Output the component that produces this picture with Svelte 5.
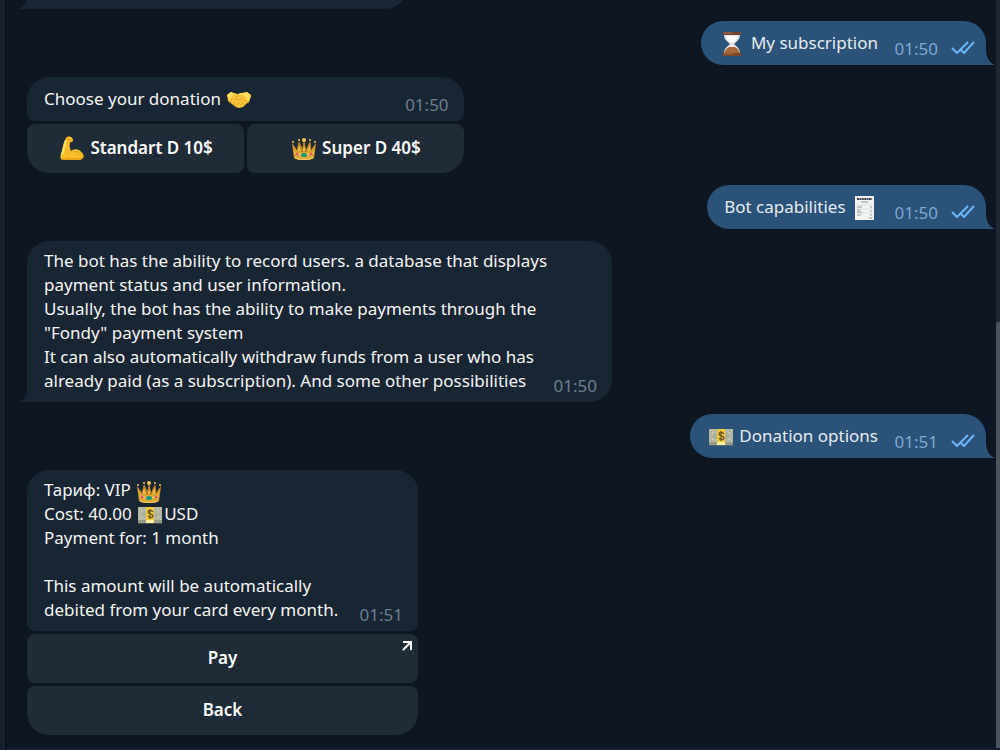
<script lang="ts">
  type Emoji = "hourglass" | "handshake" | "muscle" | "crown" | "receipt" | "money";
  type Part = string | { emoji: Emoji };
  type Action = { label: string; icon?: Emoji; href?: string };
  type Message = {
    id: number;
    out?: boolean;
    time: string;
    parts: Part[];
    width?: number;
    actions?: Action[];
    columns?: number;
  };

  const messages: Message[] = [
    { id: 1, time: "01:50", parts: [], width: 380 },
    { id: 2, out: true, time: "01:50", parts: [{ emoji: "hourglass" }, " My subscription"] },
    {
      id: 3,
      time: "01:50",
      parts: ["Choose your donation ", { emoji: "handshake" }],
      columns: 2,
      actions: [
        { label: "Standart D 10$", icon: "muscle" },
        { label: "Super D 40$", icon: "crown" },
      ],
    },
    { id: 4, out: true, time: "01:50", parts: ["Bot capabilities ", { emoji: "receipt" }] },
    {
      id: 5,
      time: "01:50",
      width: 585,
      parts: [
        "The bot has the ability to record users. a database that displays payment status and user information.\n" +
          'Usually, the bot has the ability to make payments through the "Fondy" payment system\n' +
          "It can also automatically withdraw funds from a user who has\nalready paid (as a subscription). And some other possibilities",
      ],
    },
    { id: 6, out: true, time: "01:51", parts: [{ emoji: "money" }, " Donation options"] },
    {
      id: 7,
      time: "01:51",
      width: 391,
      parts: [
        "Тариф: VIP ",
        { emoji: "crown" },
        "\nCost: 40.00 ",
        { emoji: "money" },
        "USD\nPayment for: 1 month\n\nThis amount will be automatically\ndebited from your card every month.",
      ],
      columns: 1,
      actions: [{ label: "Pay", href: "#pay" }, { label: "Back" }],
    },
  ];
</script>

{#snippet emoji(name: Emoji)}
  <svg class="emoji" viewBox="0 0 28 24" aria-hidden="true">
    {#if name === "hourglass"}
      <path d="M6 2h16c0 6-3 7-6 10 3 3 6 4 6 10H6c0-6 3-7 6-10C9 9 6 8 6 2z" fill="#dfe3e6" />
      <path d="M8 4h12c-1 4-3 5-6 7-3-2-5-3-6-7z" fill="#fbfbfa" />
      <path d="M14 14c4 1 7 3 8 8H6c1-5 4-7 8-8z" fill="#a8683c" />
      <path d="M13 12h2l2 3h-6z" fill="#efe7df" />
      <path d="M5 0h18v3H5z" fill="#70432b" />
      <path d="M5 21h18v3H5z" fill="#7b4527" />
      <path d="M6 1h8M6 22h9" stroke="#a87350" />
    {:else if name === "handshake"}
      <path d="M2 7l4-3 7 2 3-1 6-1 4 4-2 6-3 2-3 3-4 1-3-1-4-3-4-3z" fill="#f8c53b" />
      <path d="M2 7l4-3 3 2-4 6-1-1zM26 7l-4-3-3 1 5 8z" fill="#ffdc5c" />
      <path
        d="M13 7l-3 4 3 1 4-2 6 5M15 12l5 5M13 14l4 4M7 12l-2 3M10 14l-2 3M12 16l-2 3"
        fill="none"
        stroke="#dd9d25"
        stroke-width=".8"
        stroke-linecap="round"
      />
      <path d="M14 6l5 0 4 6" fill="none" stroke="#ffe477" />
    {:else if name === "muscle"}
      <path
        d="M8 2c1-2 5-2 6 0 2 2 1 4-1 4l-1 1c-1 3 0 5 1 8 4-3 9-2 12 3 2 4-1 6-5 6H6c-4 0-4-3-3-6C5 12 5 7 8 2z"
        fill="#f9bd29"
      />
      <path d="M8 4c-2 5-2 9-4 15" fill="none" stroke="#ffe169" stroke-width="2" />
      <path d="M8 3l5 1-2 3M13 15l-3 3M15 16c3-1 6 0 8 3" fill="none" stroke="#e39d1a" />
      <path d="M4 23h15c4 0 6-1 6-3" fill="none" stroke="#d9860c" />
    {:else if name === "crown"}
      <path d="M2 7l5 7 2-9 4 9 1-9 2 9 4-9 1 9 5-7-2 15c-5 3-15 3-20 0z" fill="#d49b28" />
      <path d="M4 14c5 3 15 3 20 0l-1 8c-5 3-13 3-18 0z" fill="#dcaa36" />
      <path d="M7 15l2-8 3 9 2-10 2 10 4-9 1 8" fill="#e8bf4c" stroke="#b9781c" />
      <path d="M4 17c5 2 15 2 20 0M5 22c5 2 13 2 18 0" fill="none" stroke="#f3cd62" />
      <g fill="#f3ca4b">
        <circle cx="3" cy="6" r="1" />
        <circle cx="9" cy="4" r="1" />
        <circle cx="14" cy="4" r="2" />
        <circle cx="20" cy="4" r="1" />
        <circle cx="25" cy="6" r="1" />
      </g>
      <ellipse cx="14" cy="19" rx="3" ry="2" fill="#18977a" />
      <circle cx="7" cy="18" r="1.5" fill="#e25a67" />
      <circle cx="21" cy="18" r="1.5" fill="#e25a67" />
    {:else if name === "receipt"}
      <path d="M5 0h19v24H5z" fill="#f2f3f3" />
      <path d="M7 3h15" stroke="#444b52" stroke-width="2" stroke-dasharray="2 .4" />
      <path d="M11 6h7" stroke="#92979c" />
      <path d="M6 9h17M6 13h17M6 17h17" stroke="#dfe2e4" />
      <path
        d="M7 11h5M20 11h2M7 14h3M7 16h5M20 15h2M7 19h4M20 19h2M19 22h3"
        stroke="#80868c"
        stroke-width=".8"
      />
    {:else}
      <path d="M2 4h24v16H2z" fill="#b4b6a0" />
      <path d="M3 5h22v12H3z" fill="#d9dac9" />
      <path d="M4 6h20v10H4z" fill="none" stroke="#92967f" />
      <ellipse cx="8" cy="11" rx="3" ry="4" fill="#aeb29f" />
      <ellipse cx="20" cy="11" rx="3" ry="4" fill="#aeb29f" />
      <path d="M2 18h24M2 20h24" stroke="#7c806e" />
      <path d="M10 4h8v16h-8z" fill="#f1ca3c" />
      <path d="M10 17h8v3h-8z" fill="#fff1a1" />
      <path
        d="M17 9c-1-2-5-2-5 0 0 3 5 1 5 4 0 2-4 2-5 0M14 6v10"
        fill="none"
        stroke="#6d5926"
        stroke-width="1.3"
      />
    {/if}
  </svg>
{/snippet}

<div class="window">
  <div class="side-edge"></div>
  <div class="pane">
    <main class="history">
      {#each messages as message (message.id)}
        <article
          class="message"
          class:out={message.out}
          style:width={message.width ? `${message.width}px` : undefined}
        >
          <div class="bubble" class:with-actions={message.actions}>
            <p class="text">{#each message.parts as part}{#if typeof part === "string"}{part}{:else}{@render emoji(part.emoji)}{/if}{/each}<span class="meta-space"></span></p>
            <div class="meta">
              <time>{message.time}</time>
              {#if message.out}
                <svg class="checks" viewBox="0 0 24 13" role="img" aria-label="Read">
                  <path d="M1 7l5 5L17 1M10 9l3 3L23 1" />
                </svg>
              {/if}
            </div>
            {#if message.out}
              <svg class="tail" viewBox="0 0 9 16" aria-hidden="true">
                <path d="M0 0C0 8 3 14 9 16H0z" />
              </svg>
            {:else if !message.actions}
              <svg class="tail" viewBox="0 0 9 16" aria-hidden="true">
                <path d="M9 3C9 10 6 14 0 16H9z" />
              </svg>
            {/if}
          </div>
          {#if message.actions}
            <div class="actions" class:two={message.columns === 2}>
              {#each message.actions as action (action.label)}
                {#if action.href}
                  <a class="action" href={action.href}>
                    {action.label}
                    <svg class="external" viewBox="0 0 10 10" aria-hidden="true">
                      <path d="M1 1h8v8M9 1L1 9" />
                    </svg>
                  </a>
                {:else}
                  <button type="button" class="action">
                    {#if action.icon}{@render emoji(action.icon)}&nbsp;{/if}{action.label}
                  </button>
                {/if}
              {/each}
            </div>
          {/if}
        </article>
      {/each}
    </main>
    <div class="scrollbar"><div class="thumb"></div></div>
  </div>
</div>

<style>
  :global(body) {
    margin: 0;
    background: #0e1621;
  }

  .window {
    display: flex;
    height: 100vh;
    overflow: hidden;
    box-sizing: border-box;
    background: #0e1621;
    color: #f5f5f5;
    font: 17px/24px "Noto Sans", "Open Sans", sans-serif;
  }

  .side-edge {
    width: 5px;
    flex-shrink: 0;
    background: #17212b;
    border-right: 1px solid #080e16;
  }

  .pane {
    display: flex;
    flex: 1;
    min-width: 0;
    box-sizing: border-box;
    border-bottom: 2px solid #17212b;
  }

  .history {
    flex: 1;
    min-width: 0;
    display: flex;
    flex-direction: column;
    justify-content: flex-end;
    gap: 12px;
    padding: 0 10px 13px 21px;
  }

  .message {
    align-self: flex-start;
    flex-shrink: 0;
    max-width: 585px;
  }

  .message.out {
    align-self: flex-end;
  }

  .bubble {
    position: relative;
    display: flex;
    align-items: center;
    box-sizing: border-box;
    min-height: 44px;
    padding: 8px 17px 9px;
    border-radius: 22px 22px 22px 0;
    background: #182533;
  }

  .out .bubble {
    border-radius: 22px 22px 0 22px;
    background: #2b5278;
    color: #e4ecf2;
  }

  .bubble.with-actions {
    border-radius: 22px 22px 8px 8px;
  }

  .text {
    margin: 0;
    white-space: pre-wrap;
  }

  .meta-space {
    display: inline-block;
    width: 60px;
  }

  .out .meta-space {
    width: 91px;
  }

  .meta {
    position: absolute;
    right: 15px;
    bottom: 4px;
    display: flex;
    align-items: center;
    gap: 13px;
    color: #6d7f8f;
  }

  .out .meta {
    right: 11px;
    color: #7da8d3;
  }

  .checks {
    width: 24px;
    height: 13px;
    fill: none;
    stroke: #6cb5f6;
    stroke-width: 2;
    margin-bottom: 3px;
  }

  .tail {
    position: absolute;
    left: -9px;
    bottom: 0;
    width: 9px;
    height: 16px;
    fill: #182533;
  }

  .out .tail {
    left: 100%;
    fill: #2b5278;
  }

  .emoji {
    width: 28px;
    height: 24px;
    margin: -4px 0;
    vertical-align: -3px;
  }

  .actions {
    display: grid;
    gap: 3px;
    margin-top: 3px;
  }

  .actions.two {
    grid-template-columns: 1fr 1fr;
  }

  .action {
    position: relative;
    display: flex;
    align-items: center;
    justify-content: center;
    box-sizing: border-box;
    height: 49px;
    padding: 0 31px 2px;
    border: none;
    border-radius: 8px;
    background: #1f2c38;
    color: #fff;
    font: inherit;
    font-weight: 600;
    text-decoration: none;
    white-space: nowrap;
    cursor: pointer;
  }

  .action:hover {
    background: #263542;
  }

  .action:last-child {
    border-bottom-right-radius: 22px;
  }

  .actions.two .action:first-child,
  .actions:not(.two) .action:last-child {
    border-bottom-left-radius: 22px;
  }

  .external {
    position: absolute;
    top: 7px;
    right: 6px;
    width: 10px;
    height: 10px;
    fill: none;
    stroke: #fff;
    stroke-width: 2;
  }

  .scrollbar {
    width: 4px;
    display: flex;
    align-items: flex-end;
    background: #1f2730;
  }

  .thumb {
    width: 100%;
    height: 57%;
    border-radius: 2px 0 0 0;
    background: #4a535b;
  }
</style>
